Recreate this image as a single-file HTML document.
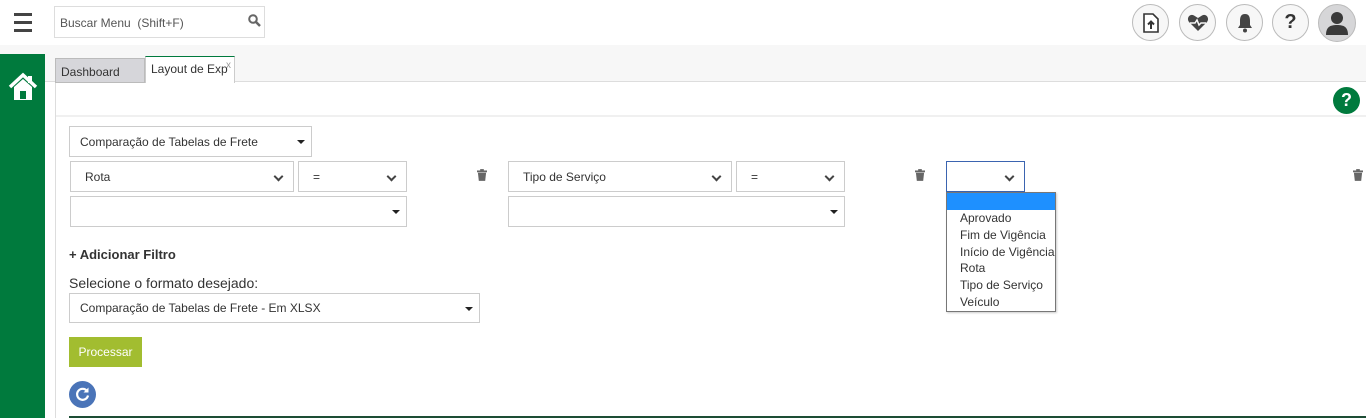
<!DOCTYPE html>
<html><head><meta charset="utf-8"><style>
*{box-sizing:border-box;margin:0;padding:0}
body{width:1366px;height:418px;overflow:hidden;background:#fff;font-family:"Liberation Sans",sans-serif;font-size:12px;color:#333;position:relative}
.abs{position:absolute}
.sel{position:absolute;border:1px solid #ccc;background:#fff;font-size:12px;color:#333;padding-left:10px;display:flex;align-items:center}
.sel.ch::after{content:"";position:absolute;right:11px;top:11px;width:5px;height:5px;border-right:2px solid #444;border-bottom:2px solid #444;transform:rotate(45deg)}
.sel.tri::after{content:"";position:absolute;right:6px;top:13px;border-left:4px solid transparent;border-right:4px solid transparent;border-top:4px solid #222}
.circ{position:absolute;top:4px;width:37px;height:37px;border-radius:50%;border:1px solid #bbb;background:#f7f7f7;display:flex;align-items:center;justify-content:center}
.trash{position:absolute;width:10px;height:12px}
.opt{height:16.8px;line-height:17px;padding-left:13px;font-size:12px;color:#333}
</style></head><body>
<div class="abs" style="left:14px;top:13px;width:18px;height:3px;background:#444;box-shadow:0 8px 0 #444,0 16px 0 #444"></div>
<div class="abs" style="left:54px;top:6px;width:211px;height:32px;border:1px solid #ddd;padding:9px 0 0 5px;font-size:12px;color:#555">Buscar Menu&nbsp; (Shift+F)</div>
<svg class="abs" style="left:248px;top:14px" width="13" height="13" viewBox="0 0 13 13"><circle cx="5" cy="5" r="3.8" fill="none" stroke="#666" stroke-width="2"/><line x1="8" y1="8" x2="12" y2="12" stroke="#666" stroke-width="2.5"/></svg>
<div class="circ" style="left:1132px"><svg width="16" height="20" viewBox="0 0 16 20"><path d="M1 1h9l5 5v13H1z" fill="#fff" stroke="#333" stroke-width="1.6"/><path d="M8 16V9M5 11.5l3-3 3 3" stroke="#333" stroke-width="2" fill="none"/></svg></div>
<div class="circ" style="left:1179px"><svg width="22" height="18" viewBox="0 0 22 18"><path d="M11 17L2 8C-1 4 3-1 7 1.5L11 4l4-2.5c4-2.5 8 2.5 5 6.5z" fill="#444"/><path d="M3 9h5l2-3 2 5 2-2h5" stroke="#f7f7f7" stroke-width="1.5" fill="none"/></svg></div>
<div class="circ" style="left:1226px"><svg width="16" height="20" viewBox="0 0 16 20"><path d="M8 1c4 0 5 3 5 7v4l2 3H1l2-3V8c0-4 1-7 5-7z" fill="#444"/><circle cx="8" cy="17.5" r="2" fill="#444"/></svg></div>
<div class="circ" style="left:1272px;font-weight:bold;font-size:20px;color:#333">?</div>
<div class="circ" style="left:1318px;background:#d6d6d8;width:38px;height:38px"><svg width="22" height="24" viewBox="0 0 22 24"><circle cx="11" cy="7" r="6" fill="#3a3a3a"/><path d="M0 24c0-8 4-10 11-10s11 2 11 10z" fill="#3a3a3a"/></svg></div>
<div class="abs" style="left:0;top:45px;width:1366px;height:9px;background:#f7f7f7"></div>
<div class="abs" style="left:0;top:54px;width:45px;height:364px;background:#007a3d"></div>
<svg class="abs" style="left:8px;top:72px" width="30" height="30" viewBox="0 0 30 30"><path d="M2 15L15 3l13 12" stroke="#fff" stroke-width="3.5" fill="none"/><rect x="20" y="4" width="4" height="7" fill="#fff"/><path d="M6 15v13h18V15L15 7z" fill="#fff"/><rect x="12" y="19" width="6" height="8" fill="#007a3d"/></svg>
<div class="abs" style="left:45px;top:54px;width:1321px;height:28px;background:#f7f7f7;border-bottom:1px solid #ddd"></div>
<div class="abs" style="left:55px;top:58px;width:90px;height:25px;background:#d6d6da;border:1px solid #bbb;padding:6px 0 0 5px;font-size:12px;color:#333">Dashboard</div>
<div class="abs" style="left:145px;top:56px;width:90px;height:27px;background:#fff;border:1px solid #ccc;border-top:1px solid #007a3d;border-bottom:none;padding:5px 0 0 5px;font-size:12px;color:#333;white-space:nowrap;overflow:hidden">Layout de Exp<span class="abs" style="left:80px;top:3px;font-size:10px;color:#999">x</span></div>
<div class="abs" style="left:55px;top:83px;width:1px;height:335px;background:#ddd"></div>
<div class="abs" style="left:56px;top:115px;width:1310px;height:2px;background:#f0f0f0"></div>
<div class="abs" style="left:1333px;top:87px;width:27px;height:27px;border-radius:50%;background:#007a3d;color:#fff;font-weight:bold;font-size:18px;text-align:center;line-height:27px">?</div>
<div class="sel tri" style="left:69px;top:126px;width:243px;height:31px">Comparação de Tabelas de Frete</div>
<div class="sel ch" style="left:70px;top:161px;width:224px;height:31px;padding-left:14px">Rota</div>
<div class="sel ch" style="left:298px;top:161px;width:109px;height:31px;padding-left:14px">=</div>
<div class="sel tri" style="left:70px;top:196px;width:337px;height:31px"></div>
<div class="sel ch" style="left:508px;top:161px;width:224px;height:31px;padding-left:14px">Tipo de Serviço</div>
<div class="sel ch" style="left:736px;top:161px;width:109px;height:31px;padding-left:14px">=</div>
<div class="sel tri" style="left:508px;top:196px;width:337px;height:31px"></div>
<div class="sel ch" style="left:946px;top:161px;width:79px;height:31px;border-color:#3b64b0"></div>
<svg class="trash" style="left:477px;top:169px" width="11" height="13" viewBox="0 0 11 13"><rect x="0" y="1.5" width="11" height="2" fill="#666"/><rect x="3.5" y="0" width="4" height="2" fill="#666"/><path d="M1 4h9l-1 9H2z" fill="#666"/></svg>
<svg class="trash" style="left:915px;top:169px" width="11" height="13" viewBox="0 0 11 13"><rect x="0" y="1.5" width="11" height="2" fill="#666"/><rect x="3.5" y="0" width="4" height="2" fill="#666"/><path d="M1 4h9l-1 9H2z" fill="#666"/></svg>
<svg class="trash" style="left:1353px;top:169px" width="11" height="13" viewBox="0 0 11 13"><rect x="0" y="1.5" width="11" height="2" fill="#666"/><rect x="3.5" y="0" width="4" height="2" fill="#666"/><path d="M1 4h9l-1 9H2z" fill="#666"/></svg>
<div class="abs" style="left:946px;top:192px;width:110px;height:120px;border:1px solid #777;background:#fff;box-shadow:1px 1px 2px rgba(0,0,0,.2)">
<div style="height:17px;background:#1e90ff"></div>
<div class="opt">Aprovado</div><div class="opt">Fim de Vigência</div><div class="opt">Início de Vigência</div><div class="opt">Rota</div><div class="opt">Tipo de Serviço</div><div class="opt">Veículo</div>
</div>
<div class="abs" style="left:69px;top:247px;font-weight:bold;font-size:13px;color:#333">+ Adicionar Filtro</div>
<div class="abs" style="left:69px;top:275px;font-size:14px;color:#333">Selecione o formato desejado:</div>
<div class="sel tri" style="left:69px;top:293px;width:411px;height:30px">Comparação de Tabelas de Frete - Em XLSX</div>
<div class="abs" style="left:69px;top:337px;width:73px;height:30px;background:#a2bd30;color:#fff;font-size:12px;text-align:center;line-height:30px">Processar</div>
<div class="abs" style="left:69px;top:381px;width:27px;height:27px;border-radius:50%;background:#4a74b8"></div>
<svg class="abs" style="left:74px;top:386px" width="17" height="17" viewBox="0 0 17 17"><path d="M13 5A5.5 5.5 0 1 0 14 9.5" stroke="#fff" stroke-width="2.2" fill="none"/><path d="M14.5 1.5v5h-5z" fill="#fff"/></svg>
<div class="abs" style="left:69px;top:416px;width:1297px;height:2px;background:#1d4d35"></div>
</body></html>
